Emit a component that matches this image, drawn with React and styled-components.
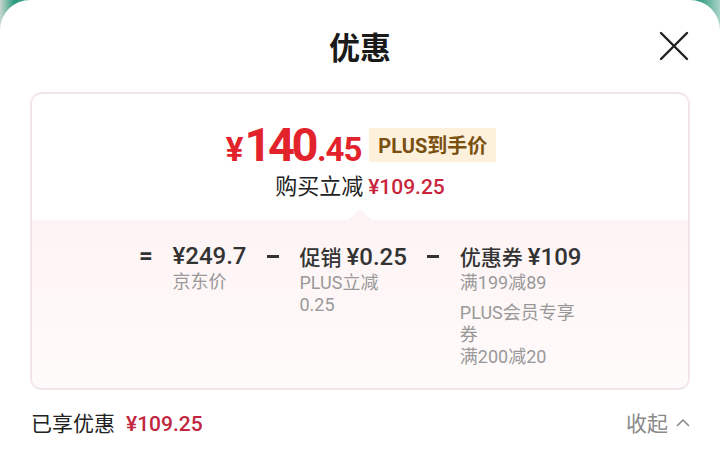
import React from 'react';
import styled, { createGlobalStyle } from 'styled-components';

const GlobalStyle = createGlobalStyle`
    html, body {
        margin: 0;
        padding: 0;
        width: 720px;
        height: 452px;
        overflow: hidden;
        background: linear-gradient(90deg, #c9d6d0 0px, #2f9d80 14px, #3aa58a 60%, #2f9b7f 97%, #a9d3c8 100%);
    }
    * { box-sizing: border-box; }
`;

const items = [
    { label: '', amount: '¥249.7', notes: [['京东价']] },
    { label: '促销', amount: '¥0.25', notes: [['PLUS立减', '0.25']] },
    { label: '优惠券', amount: '¥109', notes: [['满199减89'], ['PLUS会员专享券', '满200减20']] },
];

export default function App() {
    return (
        <>
            <GlobalStyle />
            <Sheet>
                <Header>
                    <Title>优惠</Title>
                    <CloseButton aria-label="关闭">
                        <svg width="30" height="30" viewBox="0 0 30 30">
                            <path d="M2 2 L28 28 M28 2 L2 28" stroke="#1f1f1f" strokeWidth="2.4" strokeLinecap="round" fill="none" />
                        </svg>
                    </CloseButton>
                </Header>

                <Card>
                    <Summary>
                        <PriceRow>
                            <Price>
                                <Yen>¥</Yen>
                                <Integer>140</Integer>
                                <Decimal>.45</Decimal>
                            </Price>
                            <Badge>PLUS到手价</Badge>
                        </PriceRow>
                        <SubLine>
                            购买立减 <RedAmount>¥109.25</RedAmount>
                        </SubLine>
                    </Summary>

                    <Breakdown>
                        <Formula>
                            <Operator>=</Operator>
                            {items.map((item, i) => (
                                <React.Fragment key={item.amount}>
                                    {i > 0 && <Operator><Dash /></Operator>}
                                    <Term>
                                        <TermTitle>
                                            {item.label && <TermLabel>{item.label}</TermLabel>}
                                            {item.amount}
                                        </TermTitle>
                                        {item.notes.map((lines, j) => (
                                            <TermNote key={j}>
                                                {lines.map(l => <div key={l}>{l}</div>)}
                                            </TermNote>
                                        ))}
                                    </Term>
                                </React.Fragment>
                            ))}
                        </Formula>
                    </Breakdown>
                </Card>

                <Footer>
                    <Saved>
                        已享优惠<FooterAmount>¥109.25</FooterAmount>
                    </Saved>
                    <Collapse>
                        收起
                        <svg width="14" height="9" viewBox="0 0 14 9">
                            <path d="M1.5 7.5 L7 2 L12.5 7.5" stroke="#8a8a8a" strokeWidth="1.6" fill="none" strokeLinecap="round" strokeLinejoin="round" />
                        </svg>
                    </Collapse>
                </Footer>
            </Sheet>
        </>
    );
}

const Sheet = styled.div`
    width: 720px;
    height: 452px;
    background: #fff;
    border-radius: 30px 30px 0 0;
    display: flex;
    flex-direction: column;
    font-family: Roboto, "Noto Sans CJK SC", sans-serif;
    color: #222;
`;

const Header = styled.div`
    height: 92px;
    display: flex;
    align-items: center;
    justify-content: center;
    position: relative;
`;

const Title = styled.h1`
    margin: 0 0 2px;
    font-family: "Noto Sans CJK SC", sans-serif;
    font-size: 31px;
    font-weight: 700;
    color: #1a1a1a;
    line-height: 1;
`;

const CloseButton = styled.button`
    position: absolute;
    right: 31px;
    top: 31px;
    width: 30px;
    height: 30px;
    padding: 0;
    border: none;
    background: none;
    display: flex;
`;

const Card = styled.div`
    margin: 0 30px;
    border: 2px solid #f2e6e8;
    border-radius: 12px;
    overflow: hidden;
    display: flex;
    flex-direction: column;
`;

const Summary = styled.div`
    height: 126px;
    padding-top: 27px;
    display: flex;
    flex-direction: column;
    align-items: center;
    position: relative;
    background: #fff;

    &::after {
        content: '';
        position: absolute;
        left: 50%;
        bottom: 0;
        margin-left: -12px;
        border: 12px solid transparent;
        border-bottom: 11px solid #fdf3f4;
        border-top-width: 0;
    }
`;

const PriceRow = styled.div`
    display: flex;
    align-items: center;
    gap: 8px;
    margin-left: 2px;
`;

const Price = styled.div`
    display: flex;
    align-items: baseline;
    color: #e3232c;
    font-family: Roboto, sans-serif;
    font-weight: 700;
    line-height: 1;
`;

const Yen = styled.span`
    font-size: 33px;
    margin-right: 1px;
`;

const Integer = styled.span`
    font-size: 47px;
    letter-spacing: -3.5px;
`;

const Decimal = styled.span`
    font-size: 33px;
    letter-spacing: -1px;
    margin-left: 2px;
`;

const Badge = styled.span`
    height: 34px;
    padding: 0 9px;
    display: flex;
    align-items: center;
    background: #fdf1dc;
    color: #7a5011;
    font-size: 20px;
    font-weight: 700;
`;

const SubLine = styled.div`
    margin-top: 2px;
    font-size: 22px;
    line-height: 28px;
    font-family: "Noto Sans CJK SC", sans-serif;
    color: #222;
`;

const RedAmount = styled.span`
    font-family: Roboto, sans-serif;
    font-size: 21px;
    font-weight: 500;
    color: #c9263d;
`;

const Breakdown = styled.div`
    padding: 21px 0 20px;
    background: linear-gradient(180deg, #fdf3f4 0%, #fff8f8 60%, #fffbfb 100%);
    display: flex;
    justify-content: center;
`;

const Formula = styled.div`
    display: flex;
    align-items: flex-start;
    gap: 19px;
`;

const Operator = styled.span`
    height: 30px;
    font-size: 24px;
    line-height: 30px;
    font-weight: 700;
    color: #333;
    width: 15px;
    display: flex;
    align-items: center;
    justify-content: center;
`;

const Dash = styled.span`
    width: 12px;
    height: 3px;
    margin-top: 1px;
    background: #333;
`;

const Term = styled.div`
    width: min-content;
    display: flex;
    flex-direction: column;
    gap: 8px;
`;

const TermTitle = styled.div`
    white-space: nowrap;
    font-size: 24px;
    line-height: 30px;
    font-weight: 500;
    color: #333;
    margin-bottom: -8px;
`;

const TermLabel = styled.span`
    font-family: "Noto Sans CJK SC", sans-serif;
    font-size: 21px;
    margin-right: 5px;
`;

const TermNote = styled.div`
    font-size: 18px;
    line-height: 22px;
    color: #999;
`;

const Footer = styled.div`
    flex: 1;
    display: flex;
    align-items: center;
    justify-content: space-between;
    padding: 2px 30px 0 31px;
`;

const Saved = styled.div`
    font-size: 21px;
    color: #222;
    font-family: "Noto Sans CJK SC", sans-serif;
`;

const FooterAmount = styled.span`
    margin-left: 11px;
    font-family: Roboto, sans-serif;
    font-weight: 500;
    color: #c2263f;
`;

const Collapse = styled.div`
    display: flex;
    align-items: center;
    gap: 8px;
    font-size: 21px;
    color: #8a8a8a;
    font-family: "Noto Sans CJK SC", sans-serif;
`;
